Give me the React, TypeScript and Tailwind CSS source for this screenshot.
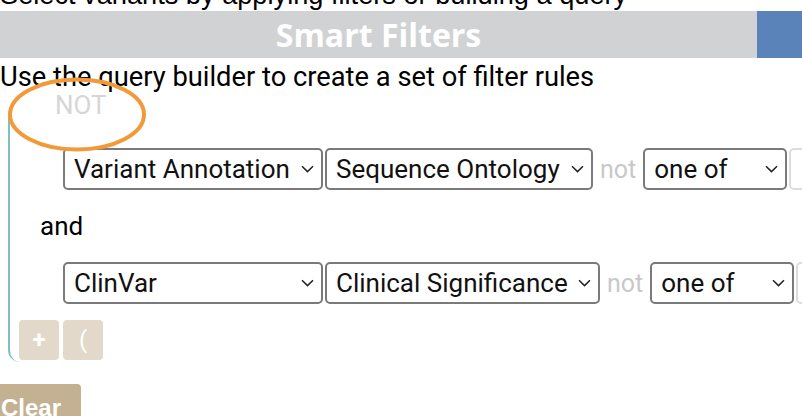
import React from "react";

const Chevron = () => (
  <svg width="13" height="8" viewBox="0 0 13 8" className="shrink-0">
    <path d="M1 1.2 L6.5 6.6 L12 1.2" fill="none" stroke="#222" strokeWidth="1.5" />
  </svg>
);

function Sel({ label, w }: { label: string; w: string }) {
  return (
    <div
      className={`${w} h-[42px] shrink-0 flex items-center justify-between pl-[9px] pr-[7px] border-2 border-[#7a7a7a] rounded-[5px] bg-white text-[26px] text-[#111] leading-none`}
    >
      <span className="whitespace-nowrap">{label}</span>
      <Chevron />
    </div>
  );
}

function Row({
  a,
  b,
  bw,
}: {
  a: string;
  b: string;
  bw: string;
}) {
  return (
    <div className="flex items-center gap-[2px] pl-[53px] h-[42px]">
      <Sel label={a} w="w-[260px]" />
      <Sel label={b} w={bw} />
      <span className="px-[5px] text-[25px] text-[#c8c8c8] leading-none">not</span>
      <Sel label="one of" w="w-[144px]" />
      <div className="w-[60px] h-[42px] shrink-0 border-2 border-[#dcdcdc] rounded-[5px] bg-white" />
    </div>
  );
}

export default function App() {
  return (
    <div
      className="relative w-[802px] h-[416px] overflow-hidden bg-white text-black"
      style={{ fontFamily: "Roboto, 'Liberation Sans', sans-serif" }}
    >
      <div
        className="mt-[-22px] h-[33px] text-[27.2px] leading-[33px] whitespace-nowrap"
        style={{ fontFamily: "'Liberation Sans', Arial, sans-serif" }}
      >
        Select variants by applying filters or building a query
      </div>
      <div className="flex h-[47px]">
        <div className="flex-1 bg-[#d1d2d4] flex items-center justify-center">
          <span
            className="text-white font-bold text-[32px] leading-none"
            style={{ fontFamily: "'Open Sans', sans-serif" }}
          >
            Smart Filters
          </span>
        </div>
        <div className="w-[45px] bg-[#5a84b9]" />
      </div>
      <div className="text-[27.3px] leading-[38px] whitespace-nowrap">
        Use the query builder to create a set of filter rules
      </div>
      <div className="pl-[55px] text-[26px] leading-[19px] h-[19px] text-[#d6d6d6]">NOT</div>
      <div className="ml-[8px] border-l-2 border-[#7fbfc4] rounded-bl-[12px] pt-[33px] pb-[2px]">
        <Row a="Variant Annotation" b="Sequence Ontology" bw="w-[268px]" />
        <div className="pl-[30px] text-[26px] leading-[72px] h-[72px]">and</div>
        <Row a="ClinVar" b="Clinical Significance" bw="w-[275px]" />
        <div className="flex gap-[4px] pl-[9px] mt-[16px]">
          <div className="w-[40px] h-[40px] rounded-[4px] bg-[#e2d9cb] flex items-center justify-center text-white font-bold text-[24px]">
            +
          </div>
          <div className="w-[40px] h-[40px] rounded-[4px] bg-[#e2d9cb] flex items-center justify-center text-white text-[24px]">
            (
          </div>
        </div>
      </div>
      <div className="mt-[22px]">
        <div
          className="inline-block ml-[-19px] pl-[20px] pr-[20px] pt-[10px] h-[50px] rounded-[4px] bg-[#c4b192] text-white font-bold text-[24px] leading-[28px]"
          style={{ fontFamily: "'Liberation Sans', Arial, sans-serif" }}
        >
          Clear
        </div>
      </div>
      <svg
        className="absolute left-0 top-0 pointer-events-none"
        width="802"
        height="416"
      >
        <ellipse cx="77" cy="114.5" rx="67" ry="35" fill="none" stroke="#f29a38" strokeWidth="4" />
      </svg>
    </div>
  );
}
